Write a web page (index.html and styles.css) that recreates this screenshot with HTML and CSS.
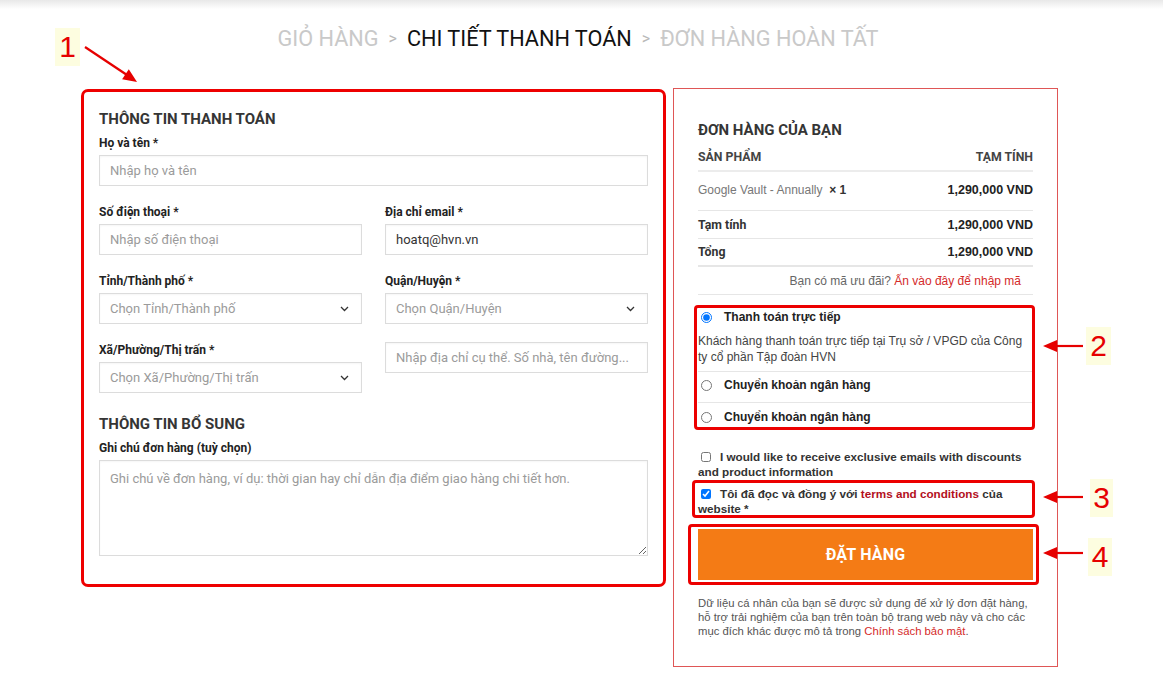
FILE: index.html
```html
<!DOCTYPE html>
<html lang="vi">
<head>
<meta charset="utf-8">
<title>Chi tiết thanh toán</title>
<link rel="stylesheet" href="styles.css">
</head>
<body>
<nav class="steps">
  <span class="step">GIỎ HÀNG</span>
  <span class="sep">&gt;</span>
  <span class="step active">CHI TIẾT THANH TOÁN</span>
  <span class="sep">&gt;</span>
  <span class="step">ĐƠN HÀNG HOÀN TẤT</span>
</nav>

<main class="checkout">
  <form class="billing">
    <h3 class="sec-title">THÔNG TIN THANH TOÁN</h3>
    <div class="field field-full">
      <label>Họ và tên *</label>
      <input class="control" placeholder="Nhập họ và tên">
    </div>
    <div class="grid">
      <div class="field">
        <label>Số điện thoại *</label>
        <input class="control" placeholder="Nhập số điện thoại">
      </div>
      <div class="field">
        <label>Địa chỉ email *</label>
        <input class="control" value="hoatq@hvn.vn">
      </div>
      <div class="field">
        <label>Tỉnh/Thành phố *</label>
        <div class="control select"><span>Chọn Tỉnh/Thành phố</span><svg class="chev" width="9" height="6" viewBox="0 0 9 6"><path d="M1 1l3.5 3.5L8 1" fill="none" stroke="#333" stroke-width="1.3"/></svg></div>
      </div>
      <div class="field">
        <label>Quận/Huyện *</label>
        <div class="control select"><span>Chọn Quận/Huyện</span><svg class="chev" width="9" height="6" viewBox="0 0 9 6"><path d="M1 1l3.5 3.5L8 1" fill="none" stroke="#333" stroke-width="1.3"/></svg></div>
      </div>
      <div class="field">
        <label>Xã/Phường/Thị trấn *</label>
        <div class="control select"><span>Chọn Xã/Phường/Thị trấn</span><svg class="chev" width="9" height="6" viewBox="0 0 9 6"><path d="M1 1l3.5 3.5L8 1" fill="none" stroke="#333" stroke-width="1.3"/></svg></div>
      </div>
      <div class="field">
        <input class="control" placeholder="Nhập địa chỉ cụ thể. Số nhà, tên đường...">
      </div>
    </div>
    <h3 class="sec-title more">THÔNG TIN BỔ SUNG</h3>
    <div class="field">
      <label>Ghi chú đơn hàng (tuỳ chọn)</label>
      <textarea class="control note" placeholder="Ghi chú về đơn hàng, ví dụ: thời gian hay chỉ dẫn địa điểm giao hàng chi tiết hơn."></textarea>
    </div>
  </form>

  <aside class="order">
    <h3 class="sec-title">ĐƠN HÀNG CỦA BẠN</h3>
    <div class="row head"><span>SẢN PHẨM</span><span>TẠM TÍNH</span></div>
    <div class="row item"><span class="pname">Google Vault - Annually&nbsp; <b class="qty">× 1</b></span><b class="price">1,290,000 VND</b></div>
    <div class="row sub"><b class="lbl">Tạm tính</b><b class="price">1,290,000 VND</b></div>
    <div class="row total"><b class="lbl">Tổng</b><b class="price">1,290,000 VND</b></div>
    <div class="coupon">Bạn có mã ưu đãi? <a class="red">Ấn vào đây để nhập mã</a></div>

    <div class="pay">
      <div class="pay-item first">
        <label class="pay-opt"><input type="radio" name="pm" checked>Thanh toán trực tiếp</label>
        <p class="pay-desc">Khách hàng thanh toán trực tiếp tại Trụ sở / VPGD của Công ty cổ phần Tập đoàn HVN</p>
      </div>
      <div class="pay-item mid">
        <label class="pay-opt"><input type="radio" name="pm">Chuyển khoản ngân hàng</label>
      </div>
      <div class="pay-item last">
        <label class="pay-opt"><input type="radio" name="pm">Chuyển khoản ngân hàng</label>
      </div>
      <span class="annot a-pay"></span>
    </div>

    <label class="consent c1"><input type="checkbox"><span>I would like to receive exclusive emails with discounts and product information</span></label>
    <div class="consent c2">
      <label><input type="checkbox" checked><span>Tôi đã đọc và đồng ý với <a class="terms">terms and conditions</a> của website *</span></label>
      <span class="annot a-terms"></span>
    </div>

    <div class="cta">
      <button type="button" class="place">ĐẶT HÀNG</button>
      <span class="annot a-cta"></span>
    </div>

    <p class="privacy">Dữ liệu cá nhân của bạn sẽ được sử dụng để xử lý đơn đặt hàng, hỗ trợ trải nghiệm của bạn trên toàn bộ trang web này và cho các mục đích khác được mô tả trong <a class="red">Chính sách bảo mật</a>.</p>
  </aside>
</main>

<div class="annotations">
  <svg class="arrows" width="1163" height="698" viewBox="0 0 1163 698">
    <g stroke="#e60000" stroke-width="2.2" fill="#e60000">
      <line x1="85" y1="47" x2="127" y2="75"/>
      <polygon stroke="none" points="137,82 128.8,69.2 122.1,79.2"/>
      <line x1="1083" y1="346" x2="1054" y2="346"/>
      <polygon stroke="none" points="1043,346 1057,340 1057,352"/>
      <line x1="1083" y1="497" x2="1054" y2="497"/>
      <polygon stroke="none" points="1043,497 1057,491 1057,503"/>
      <line x1="1083" y1="553" x2="1054" y2="553"/>
      <polygon stroke="none" points="1043,553 1057,547 1057,559"/>
    </g>
  </svg>
  <span class="num n1">1</span>
  <span class="num n2">2</span>
  <span class="num n3">3</span>
  <span class="num n4">4</span>
</div>
</body>
</html>
```

FILE: styles.css
```css
* { box-sizing: border-box; }
html, body { margin: 0; }
body {
  width: 1163px;
  height: 698px;
  overflow: hidden;
  position: relative;
  background: #fff linear-gradient(#e8e8e8, #fff 9px) no-repeat;
  font-family: Roboto, "Liberation Sans", sans-serif;
  color: #333;
}

/* breadcrumb */
.steps {
  display: flex;
  justify-content: center;
  align-items: center;
  padding: 27px 7px 0 0;
  font-size: 21.7px;
  line-height: 24px;
  color: #c9c9c9;
}
.steps .active { color: #111; }
.steps .sep { font-size: 16px; margin: 0 10px; color: #b9b9b9; }

/* layout */
.checkout {
  display: flex;
  align-items: flex-start;
  gap: 7px;
  margin: 37px 0 0 81px;
}

/* billing form */
.billing {
  width: 585px;
  margin: 1px 0 0;
  border: 3px solid #ee0000;
  border-radius: 7px;
  padding: 17px 15px 28px;
}
.sec-title {
  margin: 0 0 6px;
  font-family: Roboto, sans-serif;
  font-size: 15px;
  line-height: 20px;
  font-weight: 700;
  color: #353535;
}
.sec-title.more { margin-top: 21px; }
.field label {
  display: block;
  font-size: 12px;
  line-height: 16px;
  font-weight: 700;
  color: #222;
  margin-bottom: 4px;
}
.field-full { margin-bottom: 18px; }
.grid {
  display: grid;
  grid-template-columns: 1fr 1fr;
  column-gap: 23px;
  row-gap: 18px;
}
.control {
  display: flex;
  align-items: center;
  width: 100%;
  height: 31px;
  margin: 0;
  border: 1px solid #dcdcdc;
  border-radius: 0;
  padding: 0 10px;
  font: 13px Roboto, sans-serif;
  color: #333;
  background: #fff;
  box-shadow: inset 0 1px 2px rgba(0, 0, 0, .04);
  outline: none;
}
.control::placeholder { color: #9b9b9b; }
.select { justify-content: space-between; color: #9b9b9b; padding-right: 12px; }
.chev { display: block; }
textarea.control.note {
  display: block;
  height: 96px;
  padding: 9px 10px;
  line-height: 18px;
  resize: vertical;
}

/* order panel */
.order {
  width: 385px;
  border: 1px solid #df5656;
  padding: 31px 24px 28px;
  font-family: "Liberation Sans", Arial, sans-serif;
  font-size: 12px;
  color: #444;
}
.order .sec-title { margin: 0; font-size: 15px; }
.row {
  display: flex;
  justify-content: space-between;
  line-height: 16px;
}
.row.head {
  padding: 9px 0 5px;
  border-bottom: 2px solid #ececec;
  font-family: Roboto, sans-serif;
  font-weight: 700;
  font-size: 12.3px;
  color: #444;
}
.row.item { padding: 10px 0 12px; border-bottom: 1px solid #e6e6e6; }
.row.sub { padding: 6px 0 5px; border-bottom: 1px solid #e6e6e6; }
.row.total { padding: 5px 0 5px; border-bottom: 2px solid #e6e6e6; }
.pname { color: #777; font-size: 12px; }
.qty { color: #333; }
.price { font-size: 12.5px; color: #222; }
.lbl { font-family: Roboto, sans-serif; font-size: 12.3px; color: #333; }
.coupon {
  padding: 6px 12px 5px 0;
  line-height: 16px;
  text-align: right;
  border-bottom: 1px solid #e6e6e6;
  color: #666;
  font-size: 12px;
}
.red { color: #d42a2a; }

/* payment methods */
.pay { position: relative; margin-top: 14px; }
.pay-item + .pay-item { border-top: 1px solid #e6e6e6; }
.pay-item.first { padding: 0 0 6px; }
.pay-item.mid { padding: 5px 0 9px; }
.pay-item.last { padding: 6px 0 1px; }
.pay-opt {
  display: flex;
  align-items: center;
  font-weight: 700;
  color: #222;
  line-height: 16px;
}
.pay-opt input { width: 11px; height: 11px; margin: 0 12px 0 3px; }
.pay-desc { margin: 8px 0 0; line-height: 16px; color: #444; }

/* consents */
.consent {
  display: block;
  position: relative;
  line-height: 15px;
  font-weight: 700;
  font-size: 11.7px;
  color: #333;
}
.consent input {
  width: 10px;
  height: 10px;
  margin: 0 9px 0 3px;
  vertical-align: -1px;
}
.consent.c1 { margin-top: 23px; }
.consent.c2 { margin-top: 7px; }
.terms { color: #b3101d; }

/* button */
.cta { position: relative; margin-top: 13px; }
.place {
  display: block;
  width: 100%;
  height: 51px;
  border: 0;
  background: #f47b15;
  color: #fff;
  font: 700 16px Roboto, sans-serif;
  letter-spacing: .2px;
}

.privacy {
  margin: 16px 0 0;
  font-size: 11.3px;
  line-height: 14px;
  color: #555;
}

/* annotation overlays */
.annot {
  position: absolute;
  border: 3px solid #ec0000;
  border-radius: 4px;
  pointer-events: none;
}
.a-pay { inset: -4px -2px -4px -4px; }
.a-terms { inset: -6px -2px -2px -6px; }
.a-cta { inset: -5px -6px -5px -10px; }

.annotations { position: absolute; inset: 0; pointer-events: none; }
.arrows { position: absolute; left: 0; top: 0; }
.num {
  position: absolute;
  width: 25px;
  background: #fdfde0;
  color: #e60000;
  font: 30px/38px "Liberation Sans", Arial, sans-serif;
  text-align: center;
}
.n1 { left: 55px; top: 28px; }
.n2 { left: 1086px; top: 327px; }
.n3 { left: 1090px; top: 479px; width: 23px; }
.n4 { left: 1088px; top: 538px; width: 24px; }
```
